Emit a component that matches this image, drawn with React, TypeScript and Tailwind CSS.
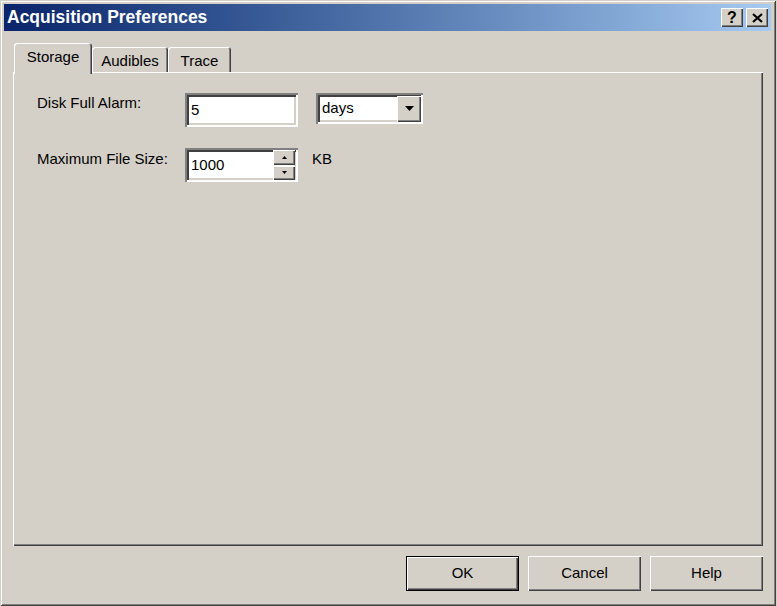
import React from "react";

const raised =
  "shadow-[inset_1px_1px_0_#ffffff,inset_-1px_-1px_0_#404040,inset_-2px_-2px_0_#808080]";
const sunken =
  "shadow-[inset_2px_2px_0_#808080,inset_-2px_-2px_0_#ffffff,inset_4px_4px_0_#404040,inset_-4px_-4px_0_#d4d0c8]";

const Arrow = ({ up = false, w = 9, h = 5 }: { up?: boolean; w?: number; h?: number }) => (
  <svg width={w} height={h} viewBox={`0 0 ${w} ${h}`}>
    <polygon points={up ? `${w / 2},0 ${w},${h} 0,${h}` : `0,0 ${w},0 ${w / 2},${h}`} fill="#000" />
  </svg>
);

const TitleBar = () => (
  <div className="flex h-[27px] items-center justify-between bg-linear-to-r from-[#0a246a] to-[#a6caf0] pl-[3px] pr-[3px]">
    <span className="text-[17.5px] font-bold leading-none text-white">Acquisition Preferences</span>
    <div className="flex gap-[3px]">
      <button className={`flex h-[19px] w-[22px] items-center justify-center bg-[#d4d0c8] ${raised}`}>
        <span className="text-[16px] font-bold leading-none">?</span>
      </button>
      <button className={`flex h-[19px] w-[22px] items-center justify-center bg-[#d4d0c8] ${raised}`}>
        <svg width="11" height="10" viewBox="0 0 11 10">
          <path d="M1 1 L10 9 M10 1 L1 9" stroke="#000" strokeWidth="2.2" />
        </svg>
      </button>
    </div>
  </div>
);

const Tab = ({ label, active, width }: { label: string; active?: boolean; width: string }) =>
  active ? (
    <div
      className={`${width} relative z-10 h-[31px] rounded-t-[3px] bg-[#d4d0c8] pt-[5px] text-center leading-[18px] shadow-[inset_1px_1px_0_#ffffff,inset_-1px_0_0_#404040,inset_-2px_0_0_#808080]`}
    >
      {label}
    </div>
  ) : (
    <div
      className={`${width} mb-[2px] h-[25px] rounded-t-[3px] bg-[#d4d0c8] pt-[5px] text-center leading-[18px] shadow-[inset_1px_1px_0_#ffffff,inset_-1px_0_0_#404040,inset_-2px_0_0_#808080]`}
    >
      {label}
    </div>
  );

const DlgButton = ({ label, primary }: { label: string; primary?: boolean }) => (
  <button
    className={`flex h-[35px] w-[113px] items-center justify-center bg-[#d4d0c8] ${
      primary
        ? "shadow-[inset_0_0_0_1px_#000000,inset_2px_2px_0_#ffffff,inset_-2px_-2px_0_#404040,inset_-3px_-3px_0_#808080]"
        : raised
    }`}
  >
    {label}
  </button>
);

export default function App() {
  return (
    <div className="h-[606px] w-[777px] bg-[#d4d0c8] font-['Liberation_Sans',Arial,sans-serif] text-[15px] text-black">
      <div className="flex h-[606px] w-[776px] flex-col pb-[15px] pl-[4px] pr-[5px] pt-[4px] shadow-[inset_1px_1px_0_#d4d0c8,inset_-1px_-1px_0_#404040,inset_2px_2px_0_#ffffff,inset_-2px_-2px_0_#808080]">
        <TitleBar />
        <div className="flex flex-1 flex-col pl-[9px] pr-[8px]">
          <div className="mt-[12px] -mb-[2px] flex h-[31px] items-end pl-[1px]">
            <Tab label="Storage" active width="w-[78px]" />
            <Tab label="Audibles" width="w-[76px]" />
            <Tab label="Trace" width="w-[63px]" />
          </div>
          <div className="flex-1 pl-[24px] pt-[21px] shadow-[inset_1px_1px_0_#ffffff,inset_-1px_-1px_0_#404040,inset_-2px_-2px_0_#808080]">
            <div className="flex items-start">
              <div className="w-[148px] pt-[1px] leading-[18px]">Disk Full Alarm:</div>
              <div className={`flex h-[34px] w-[113px] items-center bg-white px-[6px] ${sunken}`}>5</div>
              <div className={`ml-[18px] flex h-[31px] w-[107px] items-center bg-white p-[2px] pl-[6px] ${sunken}`}>
                <span className="flex-1">days</span>
                <div className={`flex h-[26px] w-[24px] items-center justify-center bg-[#d4d0c8] ${raised}`}>
                  <Arrow />
                </div>
              </div>
            </div>
            <div className="mt-[21px] flex items-start">
              <div className="w-[148px] pt-[2px] leading-[18px]">Maximum File Size:</div>
              <div className={`flex h-[34px] w-[113px] items-center bg-white py-[2px] pl-[6px] pr-[3px] ${sunken}`}>
                <span className="flex-1">1000</span>
                <div className="flex h-full w-[22px] flex-col gap-[1px]">
                  <div className={`flex flex-1 items-center justify-center bg-[#d4d0c8] ${raised}`}>
                    <Arrow up w={5} h={3} />
                  </div>
                  <div className={`flex flex-1 items-center justify-center bg-[#d4d0c8] ${raised}`}>
                    <Arrow w={5} h={3} />
                  </div>
                </div>
              </div>
              <div className="ml-[14px] pt-[2px] leading-[18px]">KB</div>
            </div>
          </div>
          <div className="mt-[10px] flex justify-end gap-[9px]">
            <DlgButton label="OK" primary />
            <DlgButton label="Cancel" />
            <DlgButton label="Help" />
          </div>
        </div>
      </div>
    </div>
  );
}
